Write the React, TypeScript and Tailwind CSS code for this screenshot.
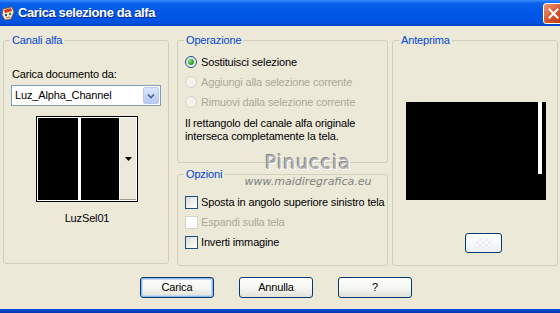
import React from "react";

const font = { fontFamily: '"Liberation Sans", Arial, sans-serif' };

function GroupBox({ title, className, children }: { title: string; className?: string; children?: React.ReactNode }) {
  return (
    <fieldset className={"border border-[#d0d0bf] rounded-[3px] min-w-0 " + (className || "")}>
      <legend className="ml-[6px] px-[2px] text-[#0046d5] leading-[13px]">{title}</legend>
      {children}
    </fieldset>
  );
}

function Radio({ label, checked, disabled }: { label: string; checked?: boolean; disabled?: boolean }) {
  return (
    <div className="flex items-center h-[20px] gap-[4px] whitespace-nowrap">
      <span
        className={
          "w-[12px] h-[12px] rounded-full border flex items-center justify-center " +
          (disabled
            ? "border-[#d7d4c6] bg-[#f3f2ea]"
            : "border-[#1c5180] bg-[linear-gradient(135deg,#dcdcd7,#ffffff)]")
        }
      >
        {checked && <span className="w-[6px] h-[6px] rounded-full bg-[radial-gradient(circle_at_35%_35%,#8fe08f,#21a121_60%)]" />}
      </span>
      <span className={disabled ? "text-[#aca899]" : "text-black"}>{label}</span>
    </div>
  );
}

function Check({ label, disabled }: { label: string; disabled?: boolean }) {
  return (
    <div className="flex items-center h-[20px] gap-[3px] whitespace-nowrap">
      <span
        className={
          "shrink-0 w-[13px] h-[13px] border " +
          (disabled ? "border-[#d7d4c6] bg-white" : "border-[#1c5180] bg-[linear-gradient(135deg,#dcdcd7,#ffffff)]")
        }
      />
      <span className={disabled ? "text-[#aca899]" : "text-black"}>{label}</span>
    </div>
  );
}

function XpButton({ label, primary }: { label: string; primary?: boolean }) {
  return (
    <button
      className={
        "w-[74px] h-[21px] rounded-[3px] border border-[#003c74] bg-[linear-gradient(to_bottom,#ffffff,#f3f3ef_60%,#e0e0d6)] text-black leading-none " +
        (primary ? "shadow-[inset_0_0_0_1px_#98b8ea,inset_0_0_0_2px_#c5d7f5]" : "")
      }
    >
      {label}
    </button>
  );
}

export default function App() {
  return (
    <div className="relative w-[560px] h-[313px] bg-[#ece9d8] flex flex-col overflow-hidden text-[11px] tracking-[-0.15px]" style={font}>
      {/* title bar */}
      <div className="h-[26px] shrink-0 flex items-center bg-[linear-gradient(to_bottom,#3a8dff_0%,#0a62ea_12%,#0056e6_50%,#0052e0_88%,#003fc0_100%)]">
        <svg width="14" height="15" viewBox="0 0 14 15" className="ml-[1px]">
          <path d="M2 3 L11 1 L13 6 L10 13 L4 14 L1 9 Z" fill="#f4e3c4" stroke="#8a5a2a" strokeWidth="0.8" />
          <path d="M3 4 L10 2 L11 5 L4 7 Z" fill="#d23a2a" />
          <circle cx="5" cy="9" r="1.2" fill="#2a4fb0" />
          <circle cx="9" cy="8" r="1.2" fill="#2a8a3a" />
          <path d="M5 12 L9 11" stroke="#8a5a2a" strokeWidth="0.8" />
        </svg>
        <span className="ml-[3px] text-white font-bold text-[13px] tracking-[-0.4px] [text-shadow:1px_1px_0_#0a2a8a]">
          Carica selezione da alfa
        </span>
        <div className="ml-auto mr-[-4px] w-[21px] h-[21px] rounded-[3px] border border-white bg-[linear-gradient(135deg,#f09a7a,#d4532e_55%,#b83a1c)] flex items-center justify-center">
          <svg width="11" height="11" viewBox="0 0 11 11">
            <path d="M1.5 1.5 L9.5 9.5 M9.5 1.5 L1.5 9.5" stroke="white" strokeWidth="2" strokeLinecap="square" />
          </svg>
        </div>
      </div>

      {/* main area */}
      <div className="flex pt-[8px] pl-[3px]">
        <GroupBox title="Canali alfa" className="w-[166px] h-[230px] shrink-0">
          <div className="flex flex-col px-[7px] pt-[21px]">
            <div className="pl-px leading-[13px]">Carica documento da:</div>
            <div className="mt-[4px] w-[150px] h-[21px] bg-white border border-[#7f9db9] flex items-center">
              <span className="pl-[3px] flex-1">Luz_Alpha_Channel</span>
              <span className="w-[16px] h-[17px] mr-px rounded-[2px] border border-[#b9c9ef] bg-[linear-gradient(to_bottom,#dbe6fd,#b5c9f7)] flex items-center justify-center">
                <svg width="8" height="6" viewBox="0 0 8 6">
                  <path d="M1 1.5 L4 4.5 L7 1.5" fill="none" stroke="#4d6185" strokeWidth="1.6" />
                </svg>
              </span>
            </div>
            <div className="mt-[10px] ml-[25px] w-[102px] h-[86px] border border-black bg-white p-px flex">
              <div className="w-[40px] bg-black" />
              <div className="w-[3px]" />
              <div className="w-[39px] bg-black" />
              <div className="w-[17px] bg-[#ece9d8] border-l border-[#f8f8f4] border-b border-b-[#9d9a8a] flex items-center justify-center">
                <svg width="7" height="4" viewBox="0 0 7 4">
                  <path d="M0 0 L7 0 L3.5 4 Z" fill="black" />
                </svg>
              </div>
            </div>
            <div className="mt-[10px] ml-[25px] w-[102px] text-center leading-[13px]">LuzSel01</div>
          </div>
        </GroupBox>

        <div className="ml-[8px] w-[211px] shrink-0 flex flex-col gap-[5px]">
          <GroupBox title="Operazione" className="h-[129px]">
            <div className="pl-[7px] pt-[5px]">
              <Radio label="Sostituisci selezione" checked />
              <Radio label="Aggiungi alla selezione corrente" disabled />
              <Radio label="Rimuovi dalla selezione corrente" disabled />
              <p className="mt-[5px] leading-[13px]">
                Il rettangolo del canale alfa originale
                <br />
                interseca completamente la tela.
              </p>
            </div>
          </GroupBox>
          <GroupBox title="Opzioni" className="h-[98px]">
            <div className="pl-[7px] pt-[11px]">
              <Check label="Sposta in angolo superiore sinistro tela" />
              <Check label="Espandi sulla tela" disabled />
              <Check label="Inverti immagine" />
            </div>
          </GroupBox>
        </div>

        <GroupBox title="Anteprima" className="ml-[4px] w-[166px] h-[232px] shrink-0">
          <div className="flex flex-col">
            <div className="mt-[55px] ml-[13px] w-[140px] h-[98px] bg-black flex justify-end items-start pr-[4px]">
              <div className="w-[4px] h-[72px] bg-white" />
            </div>
            <div className="mt-[33px] ml-[72px] w-[37px] h-[20px] rounded-[3px] border border-[#003c74] bg-[linear-gradient(to_bottom,#ffffff,#eef0f4)] flex items-center justify-center">
              <div className="w-[16px] h-[10px] opacity-40 bg-[repeating-conic-gradient(#d8dde8_0_25%,#ffffff_0_50%)] bg-[length:6px_6px]" />
            </div>
          </div>
        </GroupBox>
      </div>

      {/* buttons */}
      <div className="flex gap-[25px] pl-[140px] mt-[11px]">
        <XpButton label="Carica" primary />
        <XpButton label="Annulla" />
        <XpButton label="?" />
      </div>

      <div className="mt-auto h-[4px] bg-[linear-gradient(to_bottom,#0a4fd8,#0036b0)]" />

      {/* watermark */}
      <div className="absolute left-[247px] top-[151px] w-[122px] flex flex-col items-center pointer-events-none">
        <span className="text-[19px] leading-[22px] tracking-[1px] text-[#b0b0b0] [text-shadow:1px_1px_0_#ffffff,-1px_-1px_0_#8a8a8a]" style={{ fontFamily: '"DejaVu Sans", sans-serif' }}>
          Pinuccia
        </span>
        <span className="mt-[3px] text-[11px] leading-[12px] italic tracking-[0px] text-[#808080]" style={{ fontFamily: '"DejaVu Sans", sans-serif' }}>
          www.maidiregrafica.eu
        </span>
      </div>
    </div>
  );
}
